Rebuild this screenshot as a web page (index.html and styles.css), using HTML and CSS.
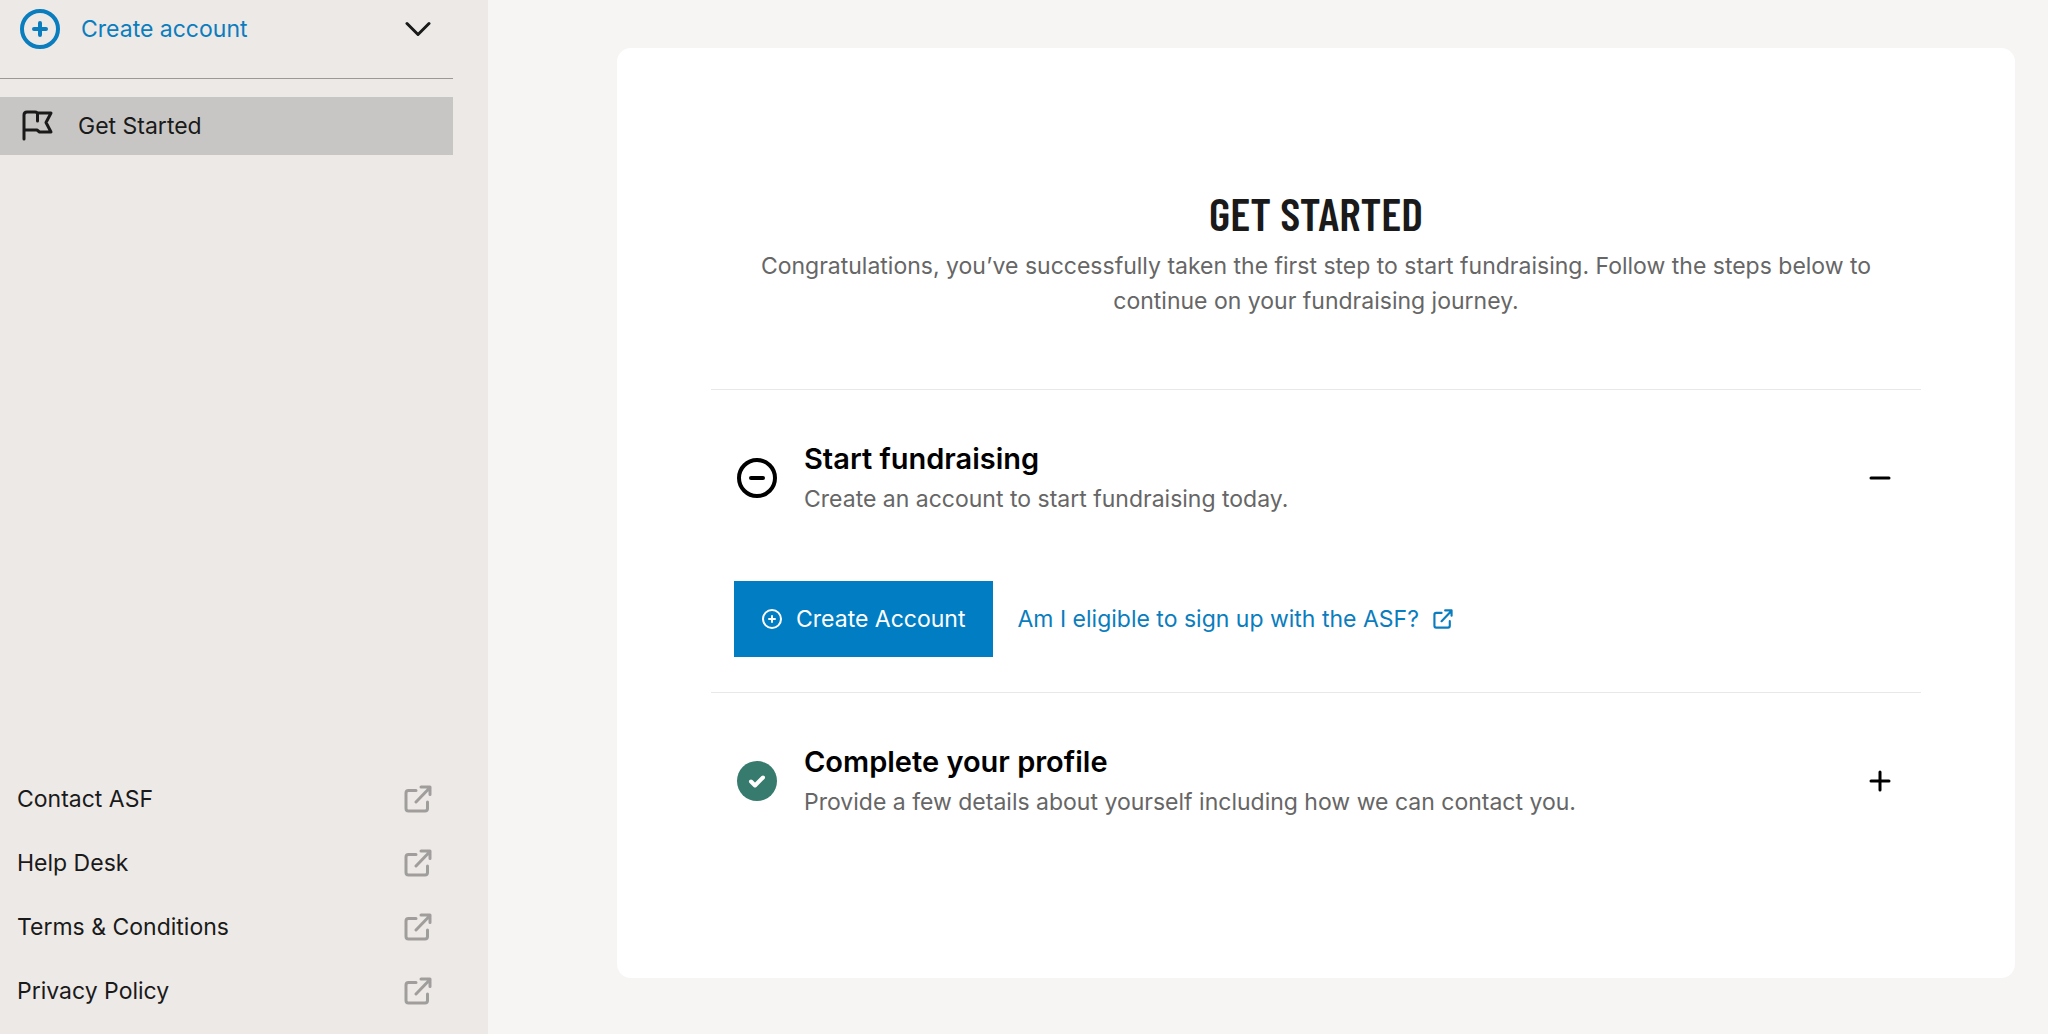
FILE: index.html
```html
<!DOCTYPE html>
<html lang="en">
<head>
  <meta charset="UTF-8">
  <meta name="viewport" content="width=device-width, initial-scale=1.0">
  <title>Get Started</title>
  <link rel="stylesheet" href="styles.css">
</head>
<body>
  <!-- Shared icons -->
  <svg class="sprite" aria-hidden="true">
    <symbol id="icon-external" viewBox="0 0 28 28">
      <path d="M12 5.500H4.500Q2 5.500 2 8V23.500Q2 26 4.500 26H21Q23.500 26 23.500 23.500V17M17 2H26V9.500M26 2.500L12 17"/>
    </symbol>
    <symbol id="icon-plus-circle" viewBox="0 0 40 40">
      <circle cx="20" cy="20" r="18"/>
      <path d="M20 14V26M14 20H26"/>
    </symbol>
  </svg>

  <div class="page">
    <aside class="sidebar">
      <button type="button" class="account">
        <svg class="account-icon"><use href="#icon-plus-circle"/></svg>
        <span>Create account</span>
        <svg class="chevron" viewBox="0 0 26 16"><path d="M2 2.500L13 13.500L24 2.500"/></svg>
      </button>
      <nav class="menu">
        <a href="#" class="menu-item active">
          <svg class="flag" viewBox="0 0 32 32">
            <path d="M2 29V5Q2 2 5 2H13Q15.500 2 15.500 4V11M15.500 3H29L24 12.500L29 22H17.500L15 20H2"/>
          </svg>
          <span>Get Started</span>
        </a>
      </nav>
      <nav class="links">
        <a href="#">Contact ASF <svg class="external"><use href="#icon-external"/></svg></a>
        <a href="#">Help Desk <svg class="external"><use href="#icon-external"/></svg></a>
        <a href="#">Terms &amp; Conditions <svg class="external"><use href="#icon-external"/></svg></a>
        <a href="#">Privacy Policy <svg class="external"><use href="#icon-external"/></svg></a>
      </nav>
    </aside>

    <main class="content">
      <div class="card">
        <h1>GET STARTED</h1>
        <p class="intro">Congratulations, you’ve successfully taken the first step to start fundraising. Follow the steps below to continue on your fundraising journey.</p>

        <section class="step">
          <button type="button" class="step-header" aria-expanded="true">
            <svg class="step-icon" viewBox="0 0 40 40">
              <circle cx="20" cy="20" r="18"/>
              <path d="M14 20H26"/>
            </svg>
            <span class="step-text">
              <span class="step-title">Start fundraising</span>
              <span class="step-info">Create an account to start fundraising today.</span>
            </span>
            <svg class="toggle" viewBox="0 0 22 22"><path d="M2 11H20"/></svg>
          </button>
          <div class="step-body">
            <button type="button" class="create-button">
              <svg class="create-icon"><use href="#icon-plus-circle"/></svg>
              Create Account
            </button>
            <a href="#" class="eligible">Am I eligible to sign up with the ASF? <svg class="external"><use href="#icon-external"/></svg></a>
          </div>
        </section>

        <section class="step">
          <button type="button" class="step-header" aria-expanded="false">
            <svg class="step-icon done" viewBox="0 0 40 40">
              <circle cx="20" cy="20" r="20"/>
              <path d="M14 20.500L18 24.500L26 16.500"/>
            </svg>
            <span class="step-text">
              <span class="step-title">Complete your profile</span>
              <span class="step-info">Provide a few details about yourself including how we can contact you.</span>
            </span>
            <svg class="toggle" viewBox="0 0 22 22"><path d="M2 11H20M11 2V20"/></svg>
          </button>
        </section>
      </div>
    </main>
  </div>
</body>
</html>
```
FILE: styles.css
```css
* {
  box-sizing: border-box;
}

body {
  margin: 0;
  font-family: Inter, sans-serif;
  font-size: 23px;
  line-height: 35px;
  color: #1a1a1a;
  background-color: #f6f5f4;
}

button {
  font: inherit;
  color: inherit;
  background: none;
  border: none;
  padding: 0;
  text-align: left;
  cursor: pointer;
}

a {
  color: inherit;
  text-decoration: none;
}

svg {
  flex-shrink: 0;
  fill: none;
  stroke: currentColor;
  stroke-width: 3;
  stroke-linecap: round;
  stroke-linejoin: round;
}

.sprite {
  position: absolute;
  width: 0;
  height: 0;
}

.page {
  display: flex;
  min-height: 100vh;
}

/* Sidebar */
.sidebar {
  display: flex;
  flex-direction: column;
  width: 488px;
  flex-shrink: 0;
  padding: 0 35px 11px 0;
  background-color: #ede9e7;
}

.account {
  display: flex;
  align-items: center;
  gap: 21px;
  height: 79px;
  padding: 0 22px 20px 20px;
  border-bottom: 1px solid #9b9997;
  color: #0a7dbe;
}

.account-icon {
  width: 40px;
  height: 40px;
  stroke-width: 4;
}

.chevron {
  width: 26px;
  height: 16px;
  margin-left: auto;
  color: #1a1a1a;
}

.menu {
  padding-top: 18px;
}

.menu-item {
  display: flex;
  align-items: center;
  gap: 24px;
  height: 58px;
  padding: 0 22px;
}

.menu-item.active {
  background-color: #c8c6c4;
}

.flag {
  width: 32px;
  height: 32px;
}

.links {
  margin-top: auto;
}

.links a {
  display: flex;
  align-items: center;
  justify-content: space-between;
  height: 64px;
  padding: 0 21px 0 17px;
}

.links .external {
  width: 28px;
  height: 28px;
  color: #a09e9c;
}

/* Main card */
.content {
  flex: 1;
  padding: 48px 33px 56px 129px;
}

.card {
  padding: 137px 94px 109px;
  border-radius: 14px;
  background-color: #fff;
}

h1 {
  margin: 0 0 8px;
  font-family: "Barlow Condensed", "Roboto Condensed", "Liberation Sans Narrow", sans-serif;
  font-size: 46px;
  font-weight: 600;
  line-height: 56px;
  text-align: center;
}

.intro {
  margin: 0 24px 70px;
  text-align: center;
  color: #666;
}

/* Steps */
.step {
  border-top: 1px solid #e8e8e8;
}

.step-header {
  display: flex;
  align-items: center;
  width: 100%;
  padding: 49px 30px 49px 26px;
}

.step-icon {
  width: 40px;
  height: 40px;
  margin-right: 27px;
  color: #000;
  stroke-width: 4;
}

.step-icon.done {
  color: #fff;
}

.step-icon.done circle {
  fill: #367b6d;
  stroke: none;
}

.step-text {
  flex: 1;
}

.step-title {
  display: block;
  margin-bottom: 3px;
  font-size: 29px;
  font-weight: 600;
  line-height: 40px;
  color: #000;
}

.step-info {
  display: block;
  color: #666;
}

.toggle {
  width: 22px;
  height: 22px;
  color: #000;
}

.step-body {
  display: flex;
  align-items: center;
  gap: 24px;
  padding: 15px 23px 35px;
}

.create-button {
  display: flex;
  align-items: center;
  gap: 14px;
  height: 76px;
  padding: 0 28px;
  color: #fff;
  background-color: #007dc3;
}

.create-icon {
  width: 20px;
  height: 20px;
  stroke-width: 4;
}

.eligible {
  display: flex;
  align-items: center;
  gap: 14px;
  color: #0a7dbe;
}

.eligible .external {
  width: 20px;
  height: 20px;
}
```
